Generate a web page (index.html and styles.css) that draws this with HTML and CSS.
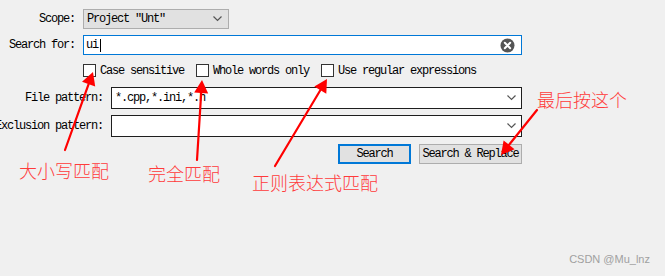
FILE: index.html
```html
<!DOCTYPE html>
<html>
<head>
<meta charset="utf-8">
<link rel="stylesheet" href="styles.css">
</head>
<body>
<div class="page">
  <div class="dialog">
    <div class="row">
      <div class="lbl lbl-a">Scope:</div>
      <div class="scope-combo">
        <span>Project "Unt"</span>
        <svg class="chev" width="9" height="6" viewBox="0 0 9 6"><polyline points="0.5,0.5 4.5,4.5 8.5,0.5" fill="none" stroke="#555" stroke-width="1.2"/></svg>
      </div>
    </div>
    <div class="row row-search">
      <div class="lbl lbl-a">Search for:</div>
      <div class="search-input">
        <span class="typed">ui<span class="caret"></span></span>
        <svg class="clear" width="15" height="15" viewBox="0 0 15 15"><circle cx="7.5" cy="7.5" r="7" fill="#555"/><path d="M4.8 4.8 L10.2 10.2 M10.2 4.8 L4.8 10.2" stroke="#fff" stroke-width="2" stroke-linecap="round"/></svg>
      </div>
    </div>
    <div class="checks">
      <span class="box"></span><span class="ctext">Case sensitive</span>
      <span class="box"></span><span class="ctext">Whole words only</span>
      <span class="box"></span><span class="ctext">Use regular expressions</span>
    </div>
    <div class="row row-file">
      <div class="lbl lbl-b">File pattern:</div>
      <div class="pat-combo">
        <span>*.cpp,*.ini,*.h</span>
        <svg class="chev" width="9" height="6" viewBox="0 0 9 6"><polyline points="0.5,0.5 4.5,4.5 8.5,0.5" fill="none" stroke="#555" stroke-width="1.2"/></svg>
      </div>
    </div>
    <div class="row row-excl">
      <div class="lbl lbl-b">Exclusion pattern:</div>
      <div class="pat-combo">
        <span></span>
        <svg class="chev" width="9" height="6" viewBox="0 0 9 6"><polyline points="0.5,0.5 4.5,4.5 8.5,0.5" fill="none" stroke="#555" stroke-width="1.2"/></svg>
      </div>
    </div>
    <div class="buttons">
      <div class="btn btn-default">Search</div>
      <div class="btn btn-replace">Search &amp; Replace</div>
    </div>
  </div>

  <svg class="arrows" width="665" height="276" viewBox="0 0 665 276">
    <g stroke="#ff0000" stroke-width="2.2" stroke-linecap="round" fill="none">
      <line x1="65" y1="150" x2="88.6" y2="84.2"/>
      <line x1="197" y1="160" x2="201.2" y2="93"/>
      <line x1="275" y1="166" x2="320.3" y2="90.2"/>
      <line x1="537" y1="110" x2="509.1" y2="144.8"/>
    </g>
    <g fill="#ff0000">
      <polygon points="93,72 95.2,86.6 82,81.8"/>
      <polygon points="202,80 208.2,93.4 194.2,92.6"/>
      <polygon points="327,79 326.3,93.8 314.3,86.6"/>
      <polygon points="501,155 514.6,149.2 503.6,140.4"/>
    </g>
  </svg>

  <div class="note note-case">大小写匹配</div>
  <div class="note note-whole">完全匹配</div>
  <div class="note note-regex">正则表达式匹配</div>
  <div class="note note-last">最后按这个</div>
  <div class="watermark">CSDN @Mu_lnz</div>
</div>
</body>
</html>
```

FILE: styles.css
```css
html, body {
  margin: 0;
  padding: 0;
  background: #f0f0f0;
}
.page {
  position: relative;
  width: 665px;
  height: 276px;
  overflow: hidden;
  background: #f0f0f0;
  font-family: "Liberation Mono", "DejaVu Sans Mono", monospace;
  font-size: 12px;
  letter-spacing: -1.2px;
  color: #000;
}
.dialog {
  width: 522px;
  padding-top: 9px;
}
.row {
  display: flex;
  align-items: center;
}
.row-search { margin-top: 6px; }
.row-file { margin-top: 10px; }
.row-excl { margin-top: 6px; }
.lbl {
  flex: none;
  display: flex;
  justify-content: flex-end;
  white-space: nowrap;
  margin-right: 8px;
}
.lbl-a { width: 75px; }
.lbl-b { width: 103px; }
.scope-combo {
  box-sizing: border-box;
  width: 146px;
  height: 20px;
  border: 1px solid #adadad;
  background: #e1e1e1;
  display: flex;
  align-items: center;
  justify-content: space-between;
  padding: 0 6px 0 3px;
  white-space: nowrap;
}
.search-input {
  box-sizing: border-box;
  flex: 1;
  height: 20px;
  border: 1px solid #0078d7;
  background: #fff;
  display: flex;
  align-items: center;
  justify-content: space-between;
  padding: 0 6px 0 2px;
}
.typed {
  display: flex;
  align-items: center;
}
.caret {
  display: inline-block;
  width: 1px;
  height: 13px;
  background: #000;
  margin-left: 2px;
}
.clear { display: block; }
.chev { display: block; }
.checks {
  margin-left: 83px;
  margin-top: 9px;
  height: 13px;
  display: flex;
  align-items: center;
}
.box {
  box-sizing: border-box;
  width: 13px;
  height: 13px;
  border: 1px solid #333;
  background: #fff;
  margin-right: 4px;
  flex: none;
}
.ctext {
  margin-right: 12px;
  white-space: nowrap;
}
.pat-combo {
  box-sizing: border-box;
  flex: 1;
  height: 22px;
  border: 1px solid #1e1e1e;
  background: #fff;
  display: flex;
  align-items: center;
  justify-content: space-between;
  padding: 0 5px 0 3px;
  white-space: nowrap;
}
.buttons {
  margin-top: 7px;
  display: flex;
  justify-content: flex-end;
  gap: 8px;
}
.btn {
  box-sizing: border-box;
  height: 20px;
  background: #e1e1e1;
  display: flex;
  align-items: center;
  justify-content: center;
  white-space: nowrap;
}
.btn-default {
  width: 73px;
  border: 2px solid #0078d7;
}
.btn-replace {
  width: 103px;
  border: 1px solid #adadad;
}
.arrows {
  position: absolute;
  left: 0;
  top: 0;
  pointer-events: none;
}
.note {
  position: absolute;
  font-family: "Noto Sans CJK SC", sans-serif;
  font-size: 18px;
  line-height: 18px;
  letter-spacing: 0;
  color: #ff3b3b;
  font-weight: 300;
  white-space: nowrap;
}
.note-case { left: 19px; top: 161px; }
.note-whole { left: 148px; top: 164px; }
.note-regex { left: 252px; top: 173px; }
.note-last { left: 537px; top: 90px; }
.watermark {
  position: absolute;
  right: 15px;
  top: 253px;
  font-family: "Liberation Sans", Arial, sans-serif;
  font-size: 11px;
  letter-spacing: 0;
  color: #a0a0a0;
}
```
